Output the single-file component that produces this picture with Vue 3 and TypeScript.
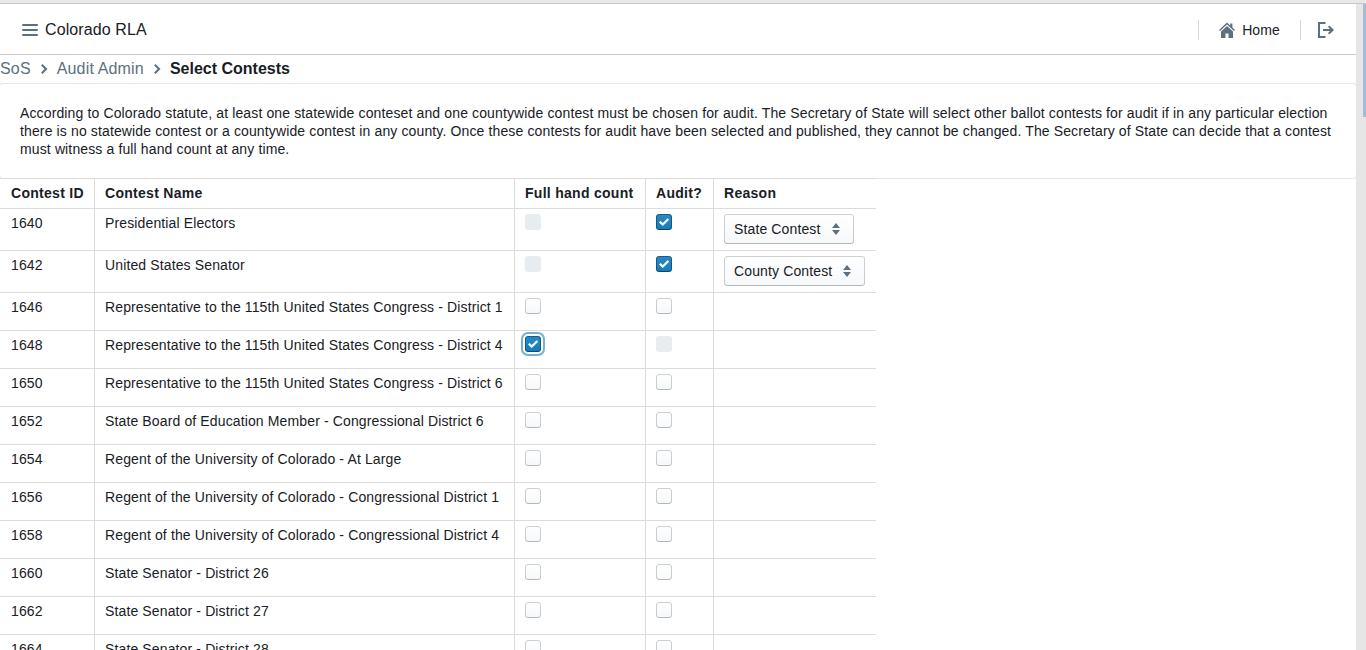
<script setup lang="ts">
interface Row {
  id: number
  name: string
  hand: 'off' | 'disabled' | 'on'
  audit: 'off' | 'disabled' | 'on'
  reason?: string
}

const rows: Row[] = [
  { id: 1640, name: 'Presidential Electors', hand: 'disabled', audit: 'on', reason: 'State Contest' },
  { id: 1642, name: 'United States Senator', hand: 'disabled', audit: 'on', reason: 'County Contest' },
  { id: 1646, name: 'Representative to the 115th United States Congress - District 1', hand: 'off', audit: 'off' },
  { id: 1648, name: 'Representative to the 115th United States Congress - District 4', hand: 'on', audit: 'disabled' },
  { id: 1650, name: 'Representative to the 115th United States Congress - District 6', hand: 'off', audit: 'off' },
  { id: 1652, name: 'State Board of Education Member - Congressional District 6', hand: 'off', audit: 'off' },
  { id: 1654, name: 'Regent of the University of Colorado - At Large', hand: 'off', audit: 'off' },
  { id: 1656, name: 'Regent of the University of Colorado - Congressional District 1', hand: 'off', audit: 'off' },
  { id: 1658, name: 'Regent of the University of Colorado - Congressional District 4', hand: 'off', audit: 'off' },
  { id: 1660, name: 'State Senator - District 26', hand: 'off', audit: 'off' },
  { id: 1662, name: 'State Senator - District 27', hand: 'off', audit: 'off' },
  { id: 1664, name: 'State Senator - District 28', hand: 'off', audit: 'off' },
]
</script>

<template>
  <div class="page">
    <div class="top-stripe" />
    <div class="viewport">
      <main class="content">
        <nav class="navbar">
          <div class="nav-left">
            <svg class="menu-icon" width="16" height="16" viewBox="0 0 16 16">
              <path d="M1 2h14a1 1 0 0 1 0 2H1a1 1 0 0 1 0-2zm0 5h14a1 1 0 0 1 0 2H1a1 1 0 0 1 0-2zm0 5h14a1 1 0 0 1 0 2H1a1 1 0 0 1 0-2z" />
            </svg>
            <span class="brand">Colorado RLA</span>
          </div>
          <div class="nav-right">
            <span class="divider" />
            <span class="home">
              <svg width="16" height="16" viewBox="0 0 16 16">
                <path d="M8 .4 0 7.9l1 1.1L8 2.5 15 9l1-1.1-2.6-2.4V1.4h-2.2v2L8 .4z" />
                <path d="M8 3.9 2 9.4V16h4.5v-4.6h3V16H14V9.4L8 3.9z" />
              </svg>
              Home
            </span>
            <span class="divider" />
            <svg class="logout" width="16" height="16" viewBox="0 0 16 16">
              <path d="M0 0h7.5v2H2v12h5.5v2H0V0z" />
              <path d="M11.4 3.6 16 8l-4.6 4.4-1.4-1.3L12 9H5V7h7l-2-2.1 1.4-1.3z" />
            </svg>
          </div>
        </nav>

        <ul class="breadcrumbs">
          <li class="crumb">SoS</li>
          <li class="sep"><svg width="16" height="16" viewBox="0 0 16 16"><path d="M6.5 3l5 5-5 5-1.4-1.4L8.7 8 5.1 4.4 6.5 3z" /></svg></li>
          <li class="crumb">Audit Admin</li>
          <li class="sep"><svg width="16" height="16" viewBox="0 0 16 16"><path d="M6.5 3l5 5-5 5-1.4-1.4L8.7 8 5.1 4.4 6.5 3z" /></svg></li>
          <li class="crumb current">Select Contests</li>
        </ul>

        <div class="card">
          According to Colorado statute, at least one statewide conteset and one countywide contest must be chosen for audit. The Secretary of State will select other ballot contests for audit if in any particular election there is no statewide contest or a countywide contest in any county. Once these contests for audit have been selected and published, they cannot be changed. The Secretary of State can decide that a contest must witness a full hand count at any time.
        </div>

        <table class="contests">
          <thead>
            <tr>
              <th class="c-id">Contest ID</th>
              <th class="c-name">Contest Name</th>
              <th class="c-hand">Full hand count</th>
              <th class="c-audit">Audit?</th>
              <th class="c-reason">Reason</th>
            </tr>
          </thead>
          <tbody>
            <tr v-for="row in rows" :key="row.id">
              <td>{{ row.id }}</td>
              <td>{{ row.name }}</td>
              <td>
                <span class="check" :class="[row.hand, { focused: row.hand === 'on' }]">
                  <svg v-if="row.hand === 'on'" width="16" height="16" viewBox="0 0 16 16"><path d="M11.6 4.2 6.8 9 4.6 6.9 3 8.5l3.8 3.6L13.2 5.8z" /></svg>
                </span>
              </td>
              <td>
                <span class="check" :class="row.audit">
                  <svg v-if="row.audit === 'on'" width="16" height="16" viewBox="0 0 16 16"><path d="M11.6 4.2 6.8 9 4.6 6.9 3 8.5l3.8 3.6L13.2 5.8z" /></svg>
                </span>
              </td>
              <td>
                <span v-if="row.reason" class="select">
                  {{ row.reason }}
                  <svg width="10" height="16" viewBox="0 0 10 16"><path d="M5 2 9 7H1L5 2zM5 14 1 9h8L5 14z" /></svg>
                </span>
              </td>
            </tr>
          </tbody>
        </table>
      </main>
      <div class="scrollbar"><div class="thumb" /></div>
    </div>
  </div>
</template>

<style>
html,
body {
  margin: 0;
  height: 650px;
  overflow: hidden;
  background: #fff;
}
</style>

<style scoped>
.page {
  display: flex;
  flex-direction: column;
  height: 650px;
  overflow: hidden;
  font-family: "Liberation Sans", Arial, sans-serif;
  font-size: 14px;
  line-height: 18px;
  letter-spacing: 0.13px;
  color: #182026;
}
.top-stripe {
  flex: none;
  height: 3px;
  background: #e8e8e8;
  border-bottom: 1px solid #c8c8c8;
}
.viewport {
  display: flex;
  flex: 1;
  min-height: 0;
}
.content {
  flex: 1;
  min-width: 0;
}
.scrollbar {
  display: flex;
  justify-content: flex-end;
  width: 10px;
  flex: none;
  background: #e6e6e6;
}
.thumb {
  width: 3px;
  height: 113px;
  background: #a3bdd8;
}
.navbar {
  display: flex;
  align-items: center;
  justify-content: space-between;
  height: 51px;
  padding: 1px 22px 0 22px;
  box-sizing: border-box;
  border-bottom: 1px solid #c8c8c8;
}
.nav-left,
.nav-right {
  display: flex;
  align-items: center;
}
.menu-icon,
.home svg,
.logout {
  fill: #5c7080;
}
.brand {
  margin-left: 7px;
  font-size: 16px;
  letter-spacing: 0.1px;
}
.divider {
  width: 1px;
  height: 20px;
  background: #d4d6d8;
}
.home {
  display: flex;
  align-items: center;
  gap: 7px;
  padding: 0 20px;
}
.logout {
  margin-left: 17px;
}
.breadcrumbs {
  display: flex;
  align-items: center;
  box-sizing: border-box;
  height: 29px;
  margin: 0;
  padding: 0 0 2px;
  list-style: none;
  font-size: 16px;
  letter-spacing: 0.16px;
}
.crumb {
  color: #5c7080;
}
.crumb.current {
  color: #182026;
  font-weight: 700;
  letter-spacing: 0;
}
.sep {
  display: flex;
  margin: 0 5px;
}
.sep svg {
  fill: #5c7080;
}
.card {
  padding: 20px;
  border-radius: 3px;
  box-shadow: 0 0 0 1px rgba(16, 22, 26, 0.1);
}
.contests {
  border-collapse: separate;
  border-spacing: 0;
  table-layout: fixed;
  width: 876px;
}
th,
td {
  box-sizing: border-box;
  padding: 5px 10px;
  text-align: left;
  vertical-align: top;
  white-space: nowrap;
  border-left: 1px solid #dcdcdc;
  border-top: 1px solid #dcdcdc;
}
th:first-child,
td:first-child {
  padding-left: 11px;
  border-left: none;
}
th {
  height: 30px;
  font-weight: 700;
  letter-spacing: 0.28px;
}
td {
  height: 38px;
}
.c-id { width: 94px; }
.c-name { width: 420px; }
.c-hand { width: 131px; }
.c-audit { width: 68px; }
.c-reason { width: 163px; }
.check {
  display: block;
  position: relative;
  width: 16px;
  height: 16px;
  border-radius: 3px;
  box-shadow: inset 0 0 0 1px rgba(16, 22, 26, 0.2), inset 0 -1px 0 rgba(16, 22, 26, 0.1);
  background: linear-gradient(#fff, rgba(255, 255, 255, 0)) #f5f8fa;
}
.check.disabled {
  background: rgba(206, 217, 224, 0.5);
  box-shadow: none;
}
.check.on {
  background: linear-gradient(rgba(255, 255, 255, 0.1), rgba(255, 255, 255, 0)) #137cbd;
  box-shadow: inset 0 0 0 1px rgba(16, 22, 26, 0.4), inset 0 -1px 0 rgba(16, 22, 26, 0.2);
}
.check.on svg {
  display: block;
  fill: #fff;
}
.check.focused {
  outline: 2px solid rgba(19, 124, 189, 0.6);
  outline-offset: 2px;
}
.select {
  display: flex;
  width: fit-content;
  align-items: center;
  gap: 10px;
  height: 30px;
  margin-bottom: 1px;
  padding: 0 13px 0 10px;
  box-sizing: border-box;
  border-radius: 3px;
  box-shadow: inset 0 0 0 1px rgba(16, 22, 26, 0.2), inset 0 -1px 0 rgba(16, 22, 26, 0.1);
  background: linear-gradient(#fff, rgba(255, 255, 255, 0)) #f5f8fa;
}
.select svg {
  fill: #5c7080;
}
</style>
